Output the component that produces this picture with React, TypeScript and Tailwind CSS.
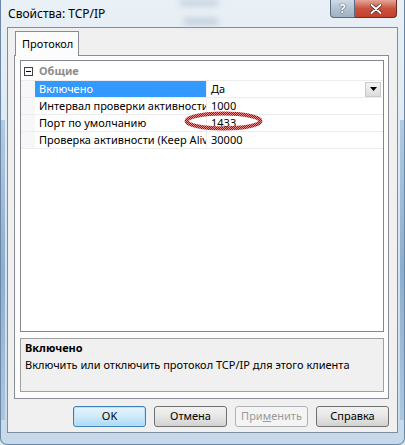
import React from "react";

function Row({ name, value, selected, dropdown }: { name: string; value: string; selected?: boolean; dropdown?: boolean }) {
  return (
    <div className="flex h-[17px] border-t border-[#ededed]">
      <div className="w-[14px] shrink-0 bg-[#f7f7f7]" />
      <div
        className={
          selected
            ? "w-[171px] shrink-0 overflow-hidden whitespace-nowrap bg-[#3399ff] pl-[4px] leading-[16px] text-white"
            : "w-[171px] shrink-0 overflow-hidden whitespace-nowrap pl-[4px] leading-[16px] text-black"
        }
      >
        {name}
      </div>
      <div className="w-px shrink-0 bg-[#ededed]" />
      <div className="flex flex-1 items-center justify-between pl-[4px] pr-[2px] leading-[16px]">
        <span>{value}</span>
        {dropdown && (
          <div className="flex h-[15px] w-[16px] items-center justify-center border border-[#c9c9c9] bg-gradient-to-b from-[#f4f4f4] to-[#dcdcdc]">
            <svg width="7" height="4" viewBox="0 0 7 4">
              <path d="M0 0 H7 L3.5 4 Z" fill="#000" />
            </svg>
          </div>
        )}
      </div>
    </div>
  );
}

function Btn({ label, kind }: { label: React.ReactNode; kind?: "default" | "disabled" }) {
  if (kind === "default")
    return (
      <div className="flex h-[21px] w-[73px] items-center justify-center rounded-[3px] border border-[#3c7fb1] bg-gradient-to-b from-[#e5f4fc] via-[#cfeaf9] to-[#a9daf5] shadow-[inset_0_0_0_1px_#bde2f7] text-black">
        {label}
      </div>
    );
  if (kind === "disabled")
    return (
      <div className="flex h-[21px] w-[73px] items-center justify-center rounded-[3px] border border-[#adb2b5] bg-[#f4f4f4] text-[#9a9a9a]">
        {label}
      </div>
    );
  return (
    <div className="flex h-[21px] w-[73px] items-center justify-center rounded-[3px] border border-[#707070] bg-gradient-to-b from-[#f2f2f2] via-[#e6e6e6] to-[#d2d2d2] text-black">
      {label}
    </div>
  );
}

export default function App() {
  return (
    <div className="h-[445px] w-[405px] overflow-hidden bg-[#dfe9f2] font-['Noto_Sans','DejaVu_Sans',sans-serif] text-[11px] text-black">
      <div className="relative h-[445px] w-[405px] rounded-b-[7px] border-b border-l border-r border-[#6a88a6] bg-gradient-to-b from-[#e9f0f6] via-[#d8e5f0] to-[#c6d9ea]">
        {/* glass blur decorations */}
        <div className="pointer-events-none absolute left-[178px] top-[0px] h-[6px] w-[40px] rounded-full bg-[#9eb0c2] opacity-50 blur-[3px]" />
        <div className="pointer-events-none absolute left-[182px] top-[18px] h-[7px] w-[36px] rounded-full bg-[#9eb0c2] opacity-50 blur-[3px]" />
        <div className="pointer-events-none absolute left-0 top-[120px] h-[300px] w-[4px] bg-gradient-to-b from-[#9fbddb] via-[#6f98c2] to-[#9fbddb] opacity-70" />
        <div className="pointer-events-none absolute right-0 top-[120px] h-[300px] w-[4px] bg-gradient-to-b from-[#9fbddb] via-[#6f98c2] to-[#9fbddb] opacity-70" />

        {/* caption buttons */}
        <div className="absolute right-[7px] top-0 flex h-[18px]">
          <div className="flex w-[25px] items-center justify-center rounded-bl-[4px] border border-t-0 border-[#5b6b7e] bg-gradient-to-b from-[#d0dae5] via-[#b3c2d2] to-[#9fb1c4]">
            <span className="text-[13px] font-bold leading-none text-white [text-shadow:0_0_1px_#2b3b4d,0_0_1px_#2b3b4d]">?</span>
          </div>
          <div className="flex w-[42px] items-center justify-center rounded-br-[4px] border border-l-0 border-t-0 border-[#6b2c22] bg-gradient-to-b from-[#e3a596] via-[#c9523f] to-[#c4402d]">
            <svg width="12" height="10" viewBox="0 0 12 10">
              <path d="M1.5 1 L10.5 9 M10.5 1 L1.5 9" stroke="#3a1410" strokeWidth="3.2" strokeLinecap="round" />
              <path d="M1.5 1 L10.5 9 M10.5 1 L1.5 9" stroke="#ffffff" strokeWidth="2" strokeLinecap="round" />
            </svg>
          </div>
        </div>

        {/* title */}
        <div className="flex h-[27px] items-center pl-[7px] text-[12px] leading-none">Свойства: TCP/IP</div>

        {/* client area */}
        <div className="ml-[6px] h-[406px] w-[391px] border border-[#7d8ea1] bg-[#f0f0f0]">
          <div className="flex h-full flex-col pl-[6px] pr-[8px] pt-[3px]">
            {/* tab */}
            <div className="relative z-10 -mb-px ml-[1px] flex h-[25px] w-[64px] items-center border border-b-0 border-[#898c95] bg-[#fcfcfc] pl-[6px]">
              Протокол
            </div>
            {/* panel */}
            <div className="h-[344px] w-[375px] border border-[#898c95] bg-[#fcfcfc] pl-[5px] pr-[4px] pt-[4px]">
              <div className="relative h-[272px] w-[364px] border border-[#828790] bg-white pt-[1px]">
                <div className="flex h-[18px] items-center">
                  <div className="flex w-[14px] justify-center">
                    <div className="flex h-[9px] w-[9px] items-center justify-center border border-[#404040] bg-white">
                      <div className="h-px w-[5px] bg-black" />
                    </div>
                  </div>
                  <span className="pl-[4px] font-bold text-[#8c8c8c]">Общие</span>
                </div>
                <Row name="Включено" value="Да" selected dropdown />
                <Row name="Интервал проверки активности" value="1000" />
                <Row name="Порт по умолчанию" value="1433" />
                <Row name="Проверка активности (Keep Alive)" value="30000" />
                <div className="border-t border-[#ededed]" />
                {/* red oval annotation */}
                <svg className="absolute left-[163px] top-[50px]" width="79" height="20" viewBox="0 0 79 20">
                  <defs>
                    <pattern id="dots" width="2" height="2" patternUnits="userSpaceOnUse">
                      <rect x="0" y="0" width="2" height="2" fill="#e88a8a" />
                      <rect x="0" y="0" width="1" height="1" fill="#c8000a" />
                      <rect x="1" y="1" width="1" height="1" fill="#c8000a" />
                    </pattern>
                  </defs>
                  <ellipse cx="39.5" cy="10" rx="37" ry="7.5" fill="none" stroke="url(#dots)" strokeWidth="4" />
                </svg>
              </div>
              <div className="mt-[6px] h-[54px] w-[364px] border border-[#a0a0a0] bg-[#f0f0f0] pl-[4px]">
                <div className="font-bold leading-[17px]">Включено</div>
                <div className="leading-[17px]">Включить или отключить протокол TCP/IP для этого клиента</div>
              </div>
            </div>
            {/* buttons */}
            <div className="mt-[7px] flex justify-end gap-[8px]">
              <Btn label="OK" kind="default" />
              <Btn label="Отмена" />
              <Btn
                kind="disabled"
                label={
                  <span>
                    При<span className="underline">м</span>енить
                  </span>
                }
              />
              <Btn label="Справка" />
            </div>
          </div>
        </div>
      </div>
    </div>
  );
}
